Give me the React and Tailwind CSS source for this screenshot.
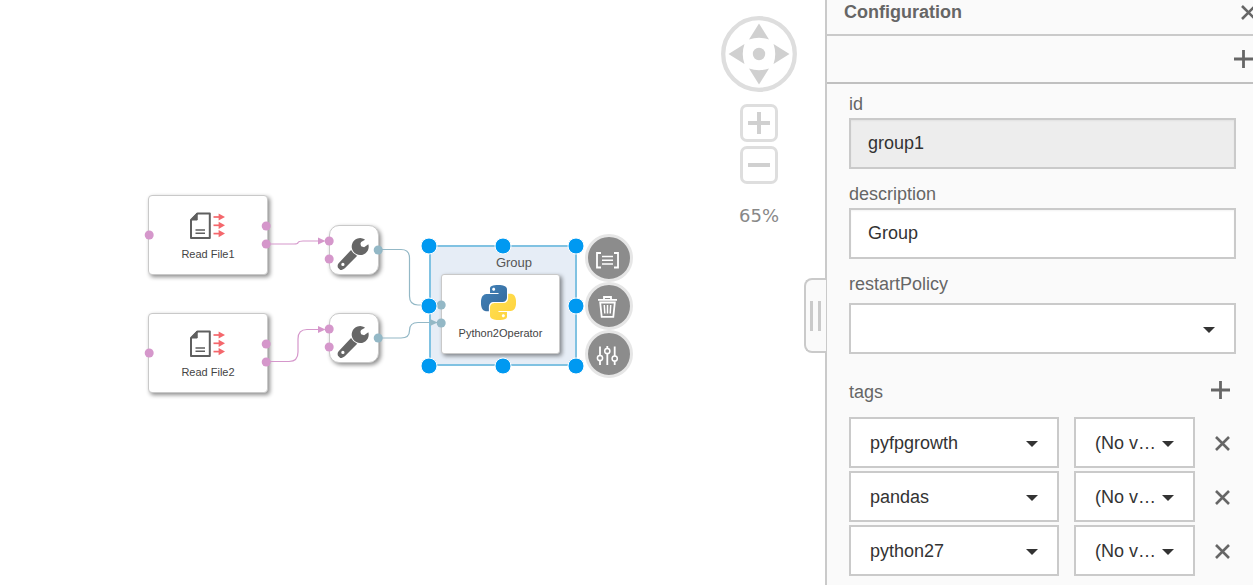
import React from "react";

const PORT_PINK = "#d597cb";
const PORT_BLUE = "#93b8c6";

function FileReadIcon() {
  return (
    <svg className="h-[28px] w-[36px]" viewBox="0 0 36 28" fill="none" aria-hidden="true">
      <path d="M7.5 1.4H19.8V26H1V8z" stroke="#5f5f5f" strokeWidth="2" strokeLinejoin="round" />
      <path d="M7.2 1L1 8h6.2z" fill="#5f5f5f" stroke="#5f5f5f" strokeLinejoin="round" />
      <path d="M5.5 18H15M5.5 21.3H15" stroke="#5f5f5f" strokeWidth="1.5" />
      {[5, 13.3, 21.6].map((y) => (
        <g key={y}>
          <path d={`M23.5 ${y}H31`} stroke="#f4676c" strokeWidth="1.7" />
          <path d={`M28.6 ${y - 3.6}L35 ${y}L28.6 ${y + 3.6}z`} fill="#f4676c" />
        </g>
      ))}
    </svg>
  );
}

function WrenchIcon() {
  return (
    <svg className="h-[32px] w-[32px]" viewBox="232 69 96 98" fill="#666" aria-hidden="true">
      <path d="M317 74L305 81Q301 86 305 94L314 97L327 88A26 26 0 1 1 317 74z" />
      <path
        fillRule="evenodd"
        d="M274 106Q280 118 293 123L255 162Q248 168 241 167L234 160Q231 152 236 146zM249 145a5 5 0 1 0 .1 10a5 5 0 1 0 -.1 -10z"
      />
    </svg>
  );
}

function PythonIcon() {
  return (
    <svg className="h-[35px] w-[35px]" viewBox="0 0 24 24" aria-hidden="true">
      <defs>
        <linearGradient id="py-blue" x1="0" y1="0" x2="1" y2="1">
          <stop offset="0" stopColor="#4284ba" />
          <stop offset="1" stopColor="#35679a" />
        </linearGradient>
        <linearGradient id="py-yellow" x1="0" y1="0" x2="1" y2="1">
          <stop offset="0" stopColor="#ffe052" />
          <stop offset="1" stopColor="#ffd23c" />
        </linearGradient>
      </defs>
      <path
        fill="url(#py-blue)"
        fillRule="evenodd"
        d="M14.25.18l.9.2.73.26.59.3.45.32.34.34.25.34.16.33.1.3.04.26.02.2-.01.13V8.5l-.05.63-.13.55-.21.46-.26.38-.3.31-.33.25-.35.19-.35.14-.33.1-.3.07-.26.04-.21.02H8.77l-.69.05-.59.14-.5.22-.41.27-.33.32-.27.35-.2.36-.15.37-.1.35-.07.32-.04.27-.02.21v3.06H3.17l-.21-.03-.28-.07-.32-.12-.35-.18-.36-.26-.36-.36-.35-.46-.32-.59-.28-.73-.21-.88-.14-1.05-.05-1.23.06-1.22.16-1.04.24-.87.32-.71.36-.57.4-.44.42-.33.42-.24.4-.16.36-.1.32-.05.24-.01h.16l.06.01h8.16v-.83H6.18l-.01-2.75-.02-.37.05-.34.11-.31.17-.28.25-.26.31-.23.38-.2.44-.18.51-.15.58-.12.64-.1.71-.06.77-.04.84-.02 1.27.05zm-6.3 1.98l-.23.33-.08.41.08.41.23.34.33.22.41.09.41-.09.33-.22.23-.34.08-.41-.08-.41-.23-.33-.33-.22-.41-.09-.41.09z"
      />
      <path
        fill="url(#py-yellow)"
        fillRule="evenodd"
        d="M21.04 6.11l.28.06.32.12.35.18.36.27.36.35.35.47.32.59.28.73.21.88.14 1.04.05 1.23-.06 1.23-.16 1.04-.24.86-.32.71-.36.57-.4.45-.42.33-.42.24-.4.16-.36.09-.32.05-.24.02-.16-.01h-8.22v.82h5.84l.01 2.76.02.36-.05.34-.11.31-.17.29-.25.25-.31.24-.38.2-.44.17-.51.15-.58.13-.64.09-.71.07-.77.04-.84.01-1.27-.04-1.07-.14-.9-.2-.73-.25-.59-.3-.45-.33-.34-.34-.25-.34-.16-.33-.1-.3-.04-.25-.02-.2.01-.13v-5.34l.05-.64.13-.54.21-.46.26-.38.3-.32.33-.24.35-.2.35-.14.33-.1.3-.06.26-.04.21-.02.13-.01h5.84l.69-.05.59-.14.5-.21.41-.28.33-.32.27-.35.2-.36.15-.36.1-.35.07-.32.04-.28.02-.21V6.07h2.09l.14.01zm-6.47 14.25l-.23.33-.08.41.08.41.23.33.33.23.41.08.41-.08.33-.23.23-.33.08-.41-.08-.41-.23-.33-.33-.23-.41-.08-.41.08z"
      />
    </svg>
  );
}

function CloseIcon() {
  return (
    <svg className="h-[15px] w-[15px]" viewBox="0 0 15 15" fill="none" stroke="#666" strokeWidth="2.6" aria-hidden="true">
      <path d="M1 1L14 14M14 1L1 14" />
    </svg>
  );
}

function PlusIcon() {
  return (
    <svg className="h-[18px] w-[19px]" viewBox="0 0 19 18" stroke="#666" strokeWidth="2.8" aria-hidden="true">
      <path d="M0 9H19M9.5 0V18" />
    </svg>
  );
}

const NODE =
  "absolute flex flex-col items-center border border-[#c9c9c9] bg-white shadow-[2px_2px_4px_rgba(0,0,0,0.45)]";

function ReadFileNode({ label, className }) {
  return (
    <div className={`${NODE} h-[80px] w-[120px] rounded-[4px] pt-4 ${className}`}>
      <FileReadIcon />
      <span className="mt-[6px] text-[11px] leading-4 text-[#444]">{label}</span>
    </div>
  );
}

function WrenchNode({ className }) {
  return (
    <div className={`${NODE} h-[50px] w-[50px] justify-center rounded-[10px] pt-[8px] pr-[2px] ${className}`}>
      <WrenchIcon />
    </div>
  );
}

const HANDLES = [
  [429, 246], [503, 246], [576, 246],
  [429, 306], [576, 306],
  [429, 366], [503, 366], [576, 366],
];

const PORTS = [
  [149, 235, PORT_PINK], [266, 226, PORT_PINK], [266, 244, PORT_PINK],
  [149, 353, PORT_PINK], [266, 344, PORT_PINK], [266, 362, PORT_PINK],
  [329, 241, PORT_PINK], [329, 259, PORT_PINK], [378, 250, PORT_BLUE],
  [329, 329, PORT_PINK], [329, 347, PORT_PINK], [378, 338, PORT_BLUE],
  [441, 305, PORT_BLUE], [441, 323, PORT_BLUE],
];

function Wires() {
  return (
    <svg className="pointer-events-none absolute top-0 left-0 h-[400px] w-[600px]" viewBox="0 0 600 400" fill="none" aria-hidden="true">
      <g stroke={PORT_PINK} strokeWidth="1.2">
        <path d="M266 244H294Q298 244 298 242.500Q299 241 303 241H322" />
        <path d="M266 361.500H289Q298 361.500 298 352V339Q298 329.500 307 329.500H322" />
      </g>
      <g stroke={PORT_BLUE} strokeWidth="1.2">
        <path d="M378 249.500H401Q409.500 249.500 409.500 258V296Q409.500 305 418 305H429" />
        <path d="M378 338H401Q409.500 338 409.500 330.500Q409.500 322.500 418 322.500H441" />
      </g>
      <path d="M318 237.500L325.500 241L318 244.500zM318 326L325.500 329.500L318 333z" fill={PORT_PINK} />
      <path d="M430 319L437.500 322.500L430 326z" fill={PORT_BLUE} />
      {PORTS.map(([x, y, fill]) => (
        <circle key={`${x}-${y}`} cx={x + 0.2} cy={y} r="4.5" fill={fill} />
      ))}
      {HANDLES.map(([x, y]) => (
        <circle key={`${x}-${y}`} cx={x} cy={y} r="8" fill="#0099f1" stroke="#fff" strokeWidth="1" />
      ))}
    </svg>
  );
}

function ActionButton({ label, className, children }) {
  return (
    <button
      type="button"
      aria-label={label}
      className={`absolute left-[585px] h-12 w-12 rounded-full border-[3px] border-[#e6e6e6] bg-[#8c8c8c] ${className}`}
    >
      <svg className="h-[42px] w-[42px]" viewBox="3 3 42 42" fill="none" stroke="#fff" strokeWidth="1.5" aria-hidden="true">
        {children}
      </svg>
    </button>
  );
}

function Navigator() {
  return (
    <div className="absolute top-4 right-[28px] flex w-[76px] flex-col items-center">
      <svg className="h-[76px] w-[76px]" viewBox="0 0 76 76" fill="#d0d0d0" role="img" aria-label="Pan">
        <circle cx="38" cy="38" r="35.800" fill="#fff" stroke="#dedede" strokeWidth="4.300" />
        <circle cx="38" cy="38" r="6.200" />
        <path d="M38 7.500L48 23.500Q38 20 28 23.500z" />
        <path d="M38 68.500L48 52.500Q38 56 28 52.500z" />
        <path d="M7.500 38L23.500 28Q20 38 23.500 48z" />
        <path d="M68.500 38L52.500 28Q56 38 52.500 48z" />
      </svg>
      <button type="button" aria-label="Zoom in" className="mt-[12px] flex h-[38px] w-[38px] items-center justify-center rounded-[7px] border-[3px] border-[#dedede] bg-white">
        <svg className="h-[22px] w-[22px]" viewBox="0 0 22 22" stroke="#d0d0d0" strokeWidth="4" aria-hidden="true">
          <path d="M0 11H22M11 0V22" />
        </svg>
      </button>
      <button type="button" aria-label="Zoom out" className="mt-[4px] flex h-[38px] w-[38px] items-center justify-center rounded-[7px] border-[3px] border-[#dedede] bg-white">
        <svg className="h-[22px] w-[22px]" viewBox="0 0 22 22" stroke="#d0d0d0" strokeWidth="4" aria-hidden="true">
          <path d="M0 11H22" />
        </svg>
      </button>
      <output className="mt-5 font-['DejaVu_Sans',sans-serif] text-[18px] leading-6 text-[#888]">65%</output>
    </div>
  );
}

function Canvas() {
  return (
    <section aria-label="Graph" className="relative min-w-0 flex-1 overflow-hidden bg-white">
      <ReadFileNode label="Read File1" className="top-[195px] left-[148px]" />
      <ReadFileNode label="Read File2" className="top-[313px] left-[148px]" />
      <WrenchNode className="top-[225px] left-[329px]" />
      <WrenchNode className="top-[313px] left-[329px]" />
      <div className="absolute top-[245px] left-[429px] h-[121px] w-[148px] border-2 border-[#80c2e2] bg-[#e6edf6] pt-[8px] pl-[22px] text-center text-[13px] leading-4 text-[#555]">
        Group
      </div>
      <div className={`${NODE} top-[274px] left-[441px] h-[80px] w-[119px] rounded-[3px] pt-[10px]`}>
        <span className="pr-[4px]"><PythonIcon /></span>
        <span className="mt-[5px] text-[11px] leading-4 text-[#444]">Python2Operator</span>
      </div>
      <Wires />
      <ActionButton label="Open configuration" className="top-[234px]">
        <path d="M16 19H12V33.500H16M29 19H33V33.500H29" strokeWidth="1.800" />
        <path d="M17 22.500H28M17 26.300H28M17 30.100H28" />
      </ActionButton>
      <ActionButton label="Delete" className="top-[282px]">
        <path d="M13 17.800H32M19 17V15H26V17" strokeWidth="1.800" />
        <path d="M15.200 20.500H29.800L28.300 34.800H16.700z" strokeWidth="1.800" />
        <path d="M19.300 23L19.800 31.500M22.500 23V31.500M25.700 23L25.200 31.500" />
      </ActionButton>
      <ActionButton label="Adjust" className="top-[330px]">
        <path d="M15 16.500V25.500M15 30.500V35M22.300 16V18.500M22.300 23.500V35M29.700 16.500V26M29.700 31V35" strokeWidth="1.800" />
        <circle cx="15" cy="28" r="2.600" />
        <circle cx="22.300" cy="21" r="2.600" />
        <circle cx="29.700" cy="28.500" r="2.600" />
      </ActionButton>
      <Navigator />
    </section>
  );
}

const FIELD = "h-[51px] w-full rounded-none border-2 border-[#cacaca] text-[18px] text-[#333] outline-none";

function TextField({ id, label, value, readOnly }) {
  return (
    <div className="flex flex-col gap-1">
      <label htmlFor={id} className="leading-5">{label}</label>
      <input
        id={id}
        type="text"
        defaultValue={value}
        readOnly={readOnly}
        className={`${FIELD} px-[17px] shadow-[inset_0_1px_2px_rgba(0,0,0,0.05)] ${readOnly ? "bg-[#ededed]" : "bg-white"}`}
      />
    </div>
  );
}

function SelectField({ id, name, value, arrow, className }) {
  return (
    <div className={`relative ${className}`}>
      <select id={id} aria-label={name} defaultValue={value} className={`${FIELD} appearance-none bg-white pt-[2px] pl-[19px]`}>
        <option value={value}>{value}</option>
      </select>
      <svg className={`pointer-events-none absolute top-[24px] h-[6px] w-[12px] ${arrow}`} viewBox="0 0 12 6" fill="#333" aria-hidden="true">
        <path d="M0 0H12L6 6z" />
      </svg>
    </div>
  );
}

const TAGS = ["pyfpgrowth", "pandas", "python27"];

function ConfigurationPanel() {
  return (
    <aside className="relative w-[34%] min-w-[428px] border-l-2 border-[#cacaca] bg-[#fafafa] text-[18px] text-[#666]">
      <button
        type="button"
        aria-label="Resize panel"
        className="absolute top-[278px] left-[-23px] flex h-[75px] w-[22px] items-center gap-[5px] rounded-l-[8px] border-2 border-r-0 border-[#cacaca] bg-[#fafafa] pl-1"
      >
        <span className="h-[30px] w-[3px] bg-[#cacaca]" />
        <span className="h-[30px] w-[3px] bg-[#cacaca]" />
      </button>

      <header className="flex h-[36px] items-center justify-between border-b-2 border-[#cacaca] pb-[10px] pl-[17px]">
        <h2 className="font-bold leading-6">Configuration</h2>
        <button type="button" aria-label="Close" className="-mr-[3px]"><CloseIcon /></button>
      </header>
      <div className="flex h-[48px] items-center justify-end border-b-2 border-[#c0c0c0]">
        <button type="button" aria-label="Add field"><PlusIcon /></button>
      </div>

      <form className="flex flex-col pt-[10px] pr-[17px] pb-2 pl-[22px]">
        <div className="flex flex-col gap-[15px]">
          <TextField id="group-id" label="id" value="group1" readOnly />
          <TextField id="group-description" label="description" value="Group" />
          <div className="flex flex-col gap-[9px]">
            <label htmlFor="restart-policy" className="leading-5">restartPolicy</label>
            <SelectField id="restart-policy" value="" arrow="right-[21px]" className="w-full" />
          </div>
        </div>

        <div className="mt-[24px] flex h-[24px] items-center justify-between pr-[6px]">
          <h3 className="pt-[4px] leading-5">tags</h3>
          <button type="button" aria-label="Add tag"><PlusIcon /></button>
        </div>
        <ul className="mt-[15px] flex flex-col gap-[3px]">
          {TAGS.map((tag) => (
            <li key={tag} className="flex items-center pr-[6px]">
              <SelectField name={`Tag ${tag}`} value={tag} arrow="right-[21px]" className="min-w-0 flex-1" />
              <SelectField name={`Version of ${tag}`} value="(No v…" arrow="right-[21px]" className="ml-[15px] w-[121px]" />
              <button type="button" aria-label={`Remove ${tag}`} className="ml-[20px] pt-[2px]"><CloseIcon /></button>
            </li>
          ))}
        </ul>
      </form>
    </aside>
  );
}

export default function App() {
  return (
    <main className="flex min-h-screen overflow-hidden bg-white font-['Liberation_Sans',Arial,sans-serif]">
      <Canvas />
      <ConfigurationPanel />
    </main>
  );
}
